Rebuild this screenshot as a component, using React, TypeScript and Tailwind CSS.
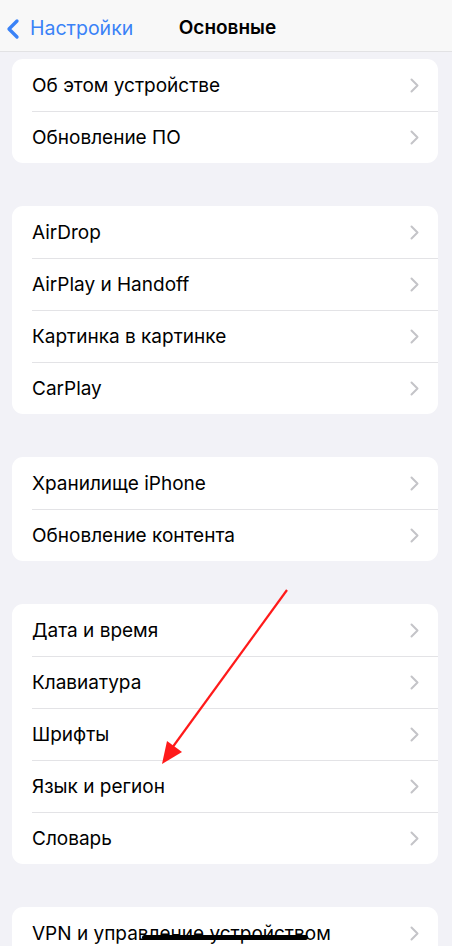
import { ChevronLeft } from 'lucide-react';

const groups: string[][] = [
  ['Об этом устройстве', 'Обновление ПО'],
  ['AirDrop', 'AirPlay и Handoff', 'Картинка в картинке', 'CarPlay'],
  ['Хранилище iPhone', 'Обновление контента'],
  ['Дата и время', 'Клавиатура', 'Шрифты', 'Язык и регион', 'Словарь'],
  ['VPN и управление устройством'],
];

function Chevron() {
  return (
    <svg width="9" height="15" viewBox="0 0 9 15" fill="none" className="shrink-0">
      <path d="M1.5 1.5 7.5 7.5 1.5 13.5" stroke="#c4c4c8" strokeWidth="2" strokeLinecap="round" strokeLinejoin="round" />
    </svg>
  );
}

function Group({ items }: { items: string[] }) {
  return (
    <div className="ml-3 mr-[14px] overflow-hidden rounded-[11px] bg-white">
      {items.map((label, i) => (
        <div key={label} className="flex h-[52px] items-center pl-5">
          <div
            className={`flex h-full flex-1 items-center justify-between pr-[19px] ${i > 0 ? 'border-t border-[#e3e3e6]' : ''}`}
          >
            <span className="pt-[2px] text-[19px] text-black">{label}</span>
            <Chevron />
          </div>
        </div>
      ))}
    </div>
  );
}

export default function App() {
  return (
    <div
      className="relative h-[946px] w-[452px] overflow-hidden bg-[#f2f2f7]"
      style={{ fontFamily: 'Inter, "Noto Sans", sans-serif' }}
    >
      <div className="relative flex h-[52px] items-center border-b border-[#e2e2e4] bg-[#f8f8f8] pt-[6px]">
        <div className="flex items-center text-[#3a82f7]">
          <ChevronLeft size={32} strokeWidth={2.5} className="-ml-[3px]" />
          <span className="ml-[1px] text-[19.5px] leading-none">Настройки</span>
        </div>
        <div className="absolute left-0 right-0 pl-[3px] text-center text-[19px] font-semibold text-black">
          Основные
        </div>
      </div>

      <div className="flex flex-col gap-[43px] pt-[7px]">
        {groups.map((g) => (
          <Group key={g[0]} items={g} />
        ))}
      </div>

      <svg className="pointer-events-none absolute left-0 top-0" width="452" height="946">
        <line x1="287" y1="590" x2="172" y2="748" stroke="#ff1a1a" strokeWidth="2.2" />
        <polygon points="162,764 167,741 182,752" fill="#ff1a1a" />
      </svg>

      <div className="absolute bottom-[6px] left-[142px] h-[5px] w-[166px] rounded-full bg-black" />
    </div>
  );
}
